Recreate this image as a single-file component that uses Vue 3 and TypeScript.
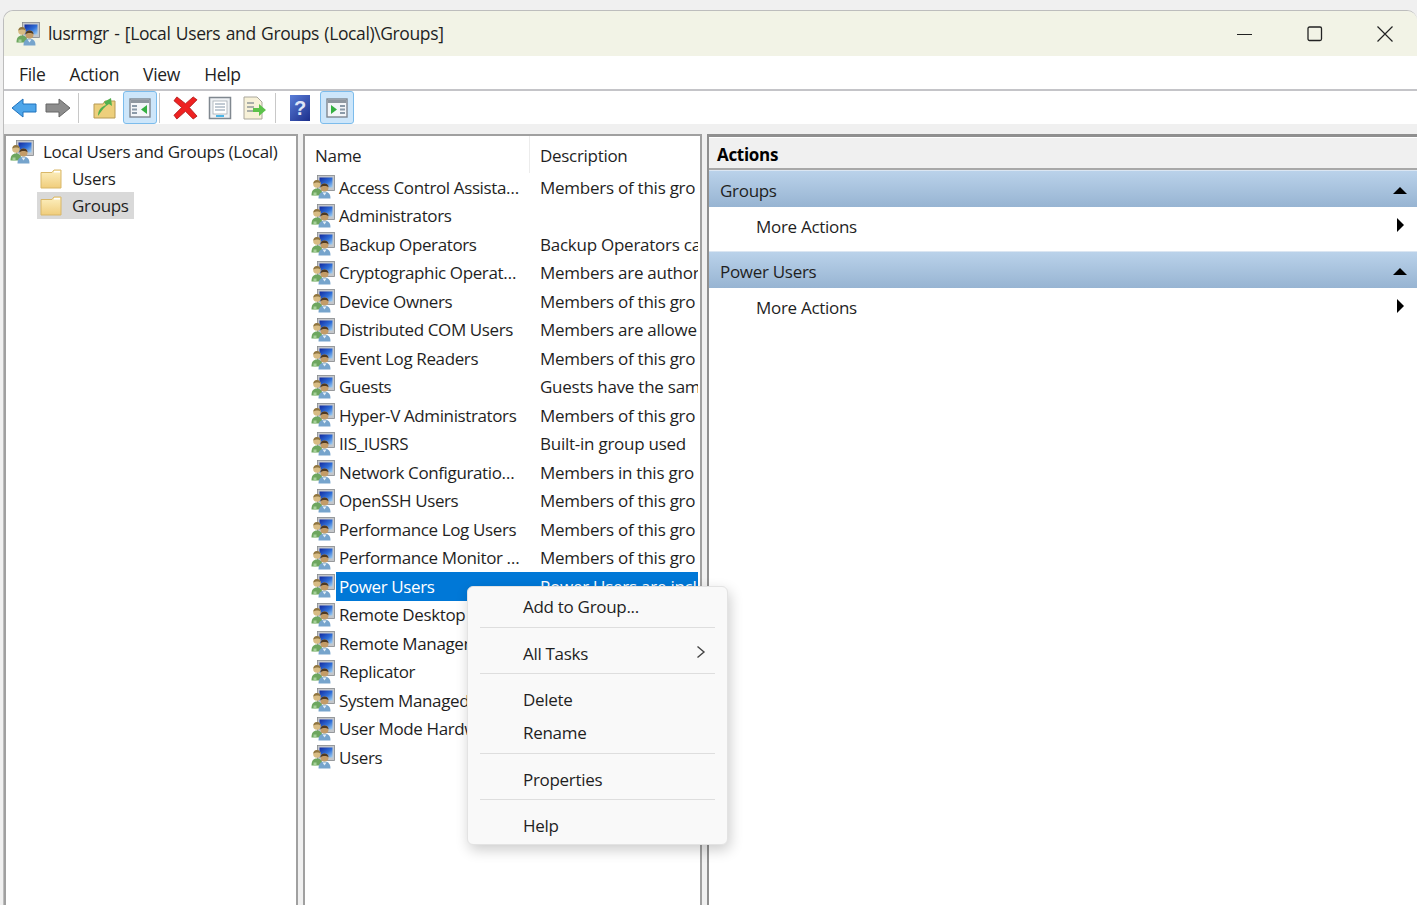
<script setup lang="ts">
interface Group {
  name: string;
  desc: string;
  selected?: boolean;
}

// descriptions are cut where the column cuts them in the console
const groups: Group[] = [
  { name: 'Access Control Assista…', desc: 'Members of this gro' },
  { name: 'Administrators', desc: '' },
  { name: 'Backup Operators', desc: 'Backup Operators ca' },
  { name: 'Cryptographic Operat…', desc: 'Members are author' },
  { name: 'Device Owners', desc: 'Members of this gro' },
  { name: 'Distributed COM Users', desc: 'Members are allowe' },
  { name: 'Event Log Readers', desc: 'Members of this gro' },
  { name: 'Guests', desc: 'Guests have the sam' },
  { name: 'Hyper-V Administrators', desc: 'Members of this gro' },
  { name: 'IIS_IUSRS', desc: 'Built-in group used' },
  { name: 'Network Configuratio…', desc: 'Members in this gro' },
  { name: 'OpenSSH Users', desc: 'Members of this gro' },
  { name: 'Performance Log Users', desc: 'Members of this gro' },
  { name: 'Performance Monitor …', desc: 'Members of this gro' },
  { name: 'Power Users', desc: 'Power Users are incl', selected: true },
  { name: 'Remote Desktop Users', desc: '' },
  { name: 'Remote Management Users', desc: '' },
  { name: 'Replicator', desc: '' },
  { name: 'System Managed Accounts', desc: '' },
  { name: 'User Mode Hardware', desc: '' },
  { name: 'Users', desc: '' },
];

const menus = ['File', 'Action', 'View', 'Help'];
</script>

<template>
  <div class="page">
    <svg class="defs" width="0" height="0">
      <defs>
        <linearGradient id="scr" x1="0" y1="0" x2="1" y2="1">
          <stop offset="0" stop-color="#12299e" />
          <stop offset="0.55" stop-color="#2f6fd8" />
          <stop offset="1" stop-color="#a5d3f2" />
        </linearGradient>
        <linearGradient id="fold" x1="0" y1="0" x2="0" y2="1">
          <stop offset="0" stop-color="#fdf0c0" />
          <stop offset="1" stop-color="#f0cd7c" />
        </linearGradient>
        <symbol id="group" viewBox="0.5 0.5 24 24">
          <rect x="7" y="1" width="17" height="15" fill="#c4c7cb" stroke="#85888c" stroke-width=".8" />
          <rect x="9" y="3" width="13" height="10" fill="url(#scr)" />
          <path d="M1 21c0-5 2-7 5.500-7s5.500 2 5.500 7z" fill="#6da65f" />
          <path d="M3 18h3v3H3z" fill="#a7d09a" />
          <circle cx="6.500" cy="9.500" r="3.800" fill="#d8bc84" />
          <path d="M2.800 9c.2-2.500 2-3.600 3.700-3.600S10 6.500 10.200 9c-1.500-1.500-5.500-1.500-7.400 0z" fill="#8e7440" />
          <path d="M8 24c0-5 2.500-7 6-7s6 2 6 7z" fill="#76a4cc" />
          <path d="M12 18l2 3 2-3z" fill="#e2edf6" />
          <circle cx="14" cy="13" r="4" fill="#c39c68" />
          <path d="M10 12.500c.2-2.500 2.200-3.600 4-3.600s3.800 1.100 4 3.600c-1.600-1.500-6-1.500-8 0z" fill="#4f3a22" />
        </symbol>
        <symbol id="folder" viewBox="0 0 22 22">
          <path d="M1 4.500l0 15.500h20V2h-7l-2 2.500z" fill="url(#fold)" stroke="#d9b768" />
          <path d="M14 3h6v1.500h-6z" fill="#fff" />
        </symbol>
        <symbol id="win" viewBox="0 0 24 24">
          <rect x="2" y="3" width="20" height="18" fill="#f4f6f8" stroke="#7f8790" stroke-width="1.400" />
          <rect x="2.700" y="3.700" width="18.600" height="3.300" fill="#8f979f" />
        </symbol>
      </defs>
    </svg>

    <div class="window">
      <header class="titlebar">
        <svg class="title-ico"><use href="#group" /></svg>
        <span class="title-text">lusrmgr - [Local Users and Groups (Local)\Groups]</span>
        <div class="caption">
          <svg width="16" height="16" viewBox="0 0 16 16"><path d="M0 8.500h15" stroke="#222" fill="none" /></svg>
          <svg width="16" height="16" viewBox="0 0 16 16"><rect x="1" y="1" width="13.500" height="13.500" rx="1.500" stroke="#222" stroke-width="1.300" fill="none" /></svg>
          <svg width="16" height="16" viewBox="0 0 16 16"><path d="M.500.500l15 15M15.500.500l-15 15" stroke="#222" stroke-width="1.200" fill="none" /></svg>
        </div>
      </header>

      <nav class="menubar">
        <span v-for="m in menus" :key="m">{{ m }}</span>
      </nav>

      <div class="toolbar">
        <svg class="tb back" viewBox="0 0 26 24">
          <path d="M1 12L12 3v5h13v8H12v5z" fill="#4ea6ea" stroke="#1f72bd" />
        </svg>
        <svg class="tb fwd" viewBox="0 0 26 24">
          <path d="M25 12L14 3v5H1v8h13v5z" fill="#8d8d8d" stroke="#666" />
        </svg>
        <i class="sep s1"></i>
        <svg class="tb up" viewBox="0 0 24 24">
          <path d="M1 8h9l2-3h10v17H1z" fill="#edcf7c" stroke="#b79a54" />
          <path d="M5 20c0-6 3-9 8-11l-2-3 7-4 1 8-3-2c-4 2-7 6-11 12z" fill="#53b04e" />
        </svg>
        <button class="tb-on on1">
          <svg viewBox="0 0 24 24">
            <use href="#win" />
            <path d="M4 9h5v2H4zM4 12.500h5v2H4zM4 16h5v2H4z" fill="#8b9aa8" />
            <path d="M19 9v9l-6-4.500z" fill="#35b041" />
          </svg>
        </button>
        <i class="sep s2"></i>
        <svg class="tb del" viewBox="0 0 26 26">
          <path d="M4 2l9 7 8-7 4 3-8 8 8 9-4 3-8-8-9 8-3-4 8-8-8-7z" fill="#e22" stroke="#a11" stroke-width=".8" />
        </svg>
        <svg class="tb prop" viewBox="0 0 24 24">
          <rect x="1.500" y="1.500" width="21" height="21" fill="#eef1f4" stroke="#808890" stroke-width="1.500" />
          <rect x="5" y="5" width="14" height="13" fill="#fff" stroke="#a5adb5" stroke-width=".8" />
          <path d="M7 8h10M7 11h10M7 14h10" stroke="#8496a8" fill="none" />
          <rect x="8" y="19" width="8" height="2" fill="#4cb6e8" />
        </svg>
        <svg class="tb exp" viewBox="0 0 24 24">
          <path d="M1 1h13l5 5v17H1z" fill="#f7f1d8" stroke="#aaa79c" />
          <path d="M4 7h7M4 11h7M4 15h6" stroke="#5f6d7a" stroke-width="1.200" fill="none" />
          <path d="M10 12h6V8l7 6-7 6v-4h-6z" fill="#5cc24a" />
        </svg>
        <i class="sep s3"></i>
        <div class="help-ico">?</div>
        <button class="tb-on on2">
          <svg viewBox="0 0 24 24">
            <use href="#win" />
            <path d="M15 9h5v2h-5zM15 12.500h5v2h-5zM15 16h5v2h-5z" fill="#8b9aa8" />
            <path d="M6 9v9l6-4.500z" fill="#35b041" />
          </svg>
        </button>
      </div>

      <div class="strip"></div>

      <main class="panes">
        <aside class="tree">
          <div class="tree-root">
            <svg class="ico"><use href="#group" /></svg>
            <span>Local Users and Groups (Local)</span>
          </div>
          <div class="tree-item">
            <svg class="fold"><use href="#folder" /></svg>
            <span class="tree-lbl">Users</span>
          </div>
          <div class="tree-item current">
            <svg class="fold"><use href="#folder" /></svg>
            <span class="tree-lbl">Groups</span>
          </div>
        </aside>

        <section class="list">
          <div class="list-head">
            <span class="col-name">Name</span>
            <span class="col-desc">Description</span>
          </div>
          <div v-for="g in groups" :key="g.name" class="row" :class="{ selected: g.selected }">
            <svg class="ico"><use href="#group" /></svg>
            <div class="row-body">
              <span class="row-name">{{ g.name }}</span>
              <span class="row-desc">{{ g.desc }}</span>
            </div>
          </div>
        </section>

        <section class="actions">
          <div class="act-head">Actions</div>
          <div class="act-bar">
            <span>Groups</span>
            <i class="tri-up"></i>
          </div>
          <div class="act-row">
            <span>More Actions</span>
            <i class="tri-right"></i>
          </div>
          <div class="act-bar">
            <span>Power Users</span>
            <i class="tri-up"></i>
          </div>
          <div class="act-row">
            <span>More Actions</span>
            <i class="tri-right"></i>
          </div>
        </section>
      </main>
    </div>

    <div class="ctx">
      <div class="ctx-item first">Add to Group...</div>
      <hr />
      <div class="ctx-item">
        All Tasks
        <svg width="10" height="14" viewBox="0 0 10 14"><path d="M1.500 1.500L8 7l-6.500 5.500" stroke="#444" stroke-width="1.400" fill="none" /></svg>
      </div>
      <hr />
      <div class="ctx-item del-item">Delete</div>
      <div class="ctx-item ren-item">Rename</div>
      <hr />
      <div class="ctx-item">Properties</div>
      <hr />
      <div class="ctx-item">Help</div>
    </div>
  </div>
</template>

<style scoped>
.page {
  position: relative;
  width: 1417px;
  height: 905px;
  overflow: hidden;
  background: #f0f0f0;
  padding: 10px 0 0 3px;
  box-sizing: border-box;
  font-family: "Open Sans", "Noto Sans", sans-serif;
  font-size: 17px;
  letter-spacing: -0.3px;
  color: #1f1f1f;
}

.defs {
  position: absolute;
}

.window {
  height: 100%;
  display: flex;
  flex-direction: column;
  border: 1px solid #bdbdbd;
  border-width: 1px 0 0 1px;
  border-top-left-radius: 10px;
  border-top-right-radius: 10px;
  overflow: hidden;
  background: #f0f0f0;
}

.titlebar {
  flex: 0 0 45px;
  display: flex;
  align-items: center;
  background: #f2f3e6;
  padding-left: 12px;
}

.title-ico {
  width: 24px;
  height: 24px;
  margin-right: 8px;
}

.title-text {
  font-size: 17.5px;
  letter-spacing: -0.38px;
  word-spacing: 1.2px;
  padding-bottom: 2px;
}

.caption {
  margin-left: auto;
  display: flex;
  gap: 54px;
  padding-right: 24px;
  padding-top: 1px;
}

.menubar {
  flex: 0 0 31px;
  display: flex;
  align-items: center;
  gap: 24px;
  padding: 2px 0 0 15px;
  font-size: 17.5px;
  background: #fff;
  border-bottom: 2px solid #c4c4c8;
}

.toolbar {
  flex: 0 0 33px;
  display: flex;
  align-items: center;
  background: #fff;
  padding-left: 7px;
}

.tb {
  display: block;
  flex: none;
}

.back {
  width: 26px;
  height: 24px;
  margin-right: 8px;
}

.fwd {
  width: 26px;
  height: 24px;
  margin-right: 7px;
}

.sep {
  width: 1px;
  height: 30px;
  background: #c8c8c8;
  flex: none;
}

.s1 {
  margin: 0 14px 0 0;
}

.s2 {
  margin: 0 13px 0 2px;
}

.s3 {
  margin: 0 14px 0 8px;
}

.up {
  width: 24px;
  height: 24px;
  margin-right: 6px;
}

.tb-on {
  width: 34px;
  height: 33px;
  padding: 4px 4px;
  box-sizing: border-box;
  background: #cde6fa;
  border: 1px solid #7cbcec;
  border-radius: 3px;
  flex: none;
}

.tb-on svg {
  display: block;
  width: 24px;
  height: 24px;
}

.del {
  width: 25px;
  height: 25px;
  margin-right: 10px;
}

.prop {
  width: 24px;
  height: 24px;
  margin-right: 11px;
}

.exp {
  width: 24px;
  height: 24px;
}

.help-ico {
  flex: none;
  width: 20px;
  height: 26px;
  margin-right: 10px;
  background: linear-gradient(135deg, #5a7ed8, #1c2f8c);
  color: #dfe6f7;
  font: bold 20px/26px "Liberation Sans", sans-serif;
  text-align: center;
}

.strip {
  flex: 0 0 10px;
  background: #f0f0f0;
}

.panes {
  flex: 1;
  min-height: 0;
  display: flex;
  gap: 5px;
  background: #f0f0f0;
}

.tree {
  flex: 0 0 294px;
  box-sizing: border-box;
  background: #fff;
  border: 2px solid #a0a0a0;
  border-bottom: 0;
  padding: 2px 0 0 4px;
}

.tree-root {
  display: flex;
  align-items: center;
  gap: 9px;
  height: 27px;
}

.ico {
  width: 24px;
  height: 24px;
  flex: none;
}

.tree-item {
  display: flex;
  align-items: center;
  height: 27px;
  margin-left: 27px;
  padding: 0 5px 0 3px;
  width: fit-content;
}

.tree-item.current {
  background: #d9d9d9;
}

.fold {
  width: 22px;
  height: 22px;
  margin-right: 10px;
}

.list {
  flex: 0 0 399px;
  box-sizing: border-box;
  background: #fff;
  border: 2px solid #a0a0a0;
  border-bottom: 0;
  overflow: hidden;
}

.list-head {
  display: flex;
  height: 37px;
  align-items: center;
}

.col-name {
  width: 225px;
  padding: 2px 0 0 10px;
  box-sizing: border-box;
  border-right: 1px solid #ececec;
  height: 100%;
  display: flex;
  align-items: center;
}

.col-desc {
  padding: 2px 0 0 10px;
}

.row {
  display: flex;
  align-items: center;
  height: 28.5px;
  padding-left: 6px;
}

.row-body {
  flex: 1;
  min-width: 0;
  display: flex;
  align-items: center;
  height: 100%;
  margin-right: 2px;
  margin-left: 1px;
  overflow: hidden;
}

.row.selected .row-body {
  background: #0078d7;
  color: #fff;
}

.row-name {
  flex: 0 0 204px;
  padding-left: 3px;
  box-sizing: border-box;
  letter-spacing: -0.38px;
  white-space: nowrap;
  overflow: hidden;
}

.row-desc {
  flex: 1;
  white-space: nowrap;
  overflow: hidden;
  letter-spacing: -0.25px;
}

.actions {
  flex: 1;
  min-width: 0;
  background: #fff;
  border-top: 3px solid #8f8f8f;
  border-left: 2px solid #8f8f8f;
  padding-top: 1px;
}

.act-head {
  height: 30px;
  line-height: 33px;
  padding-left: 8px;
  font-weight: 700;
  color: #000;
  background: #f0f0f0;
  border-bottom: 2px solid #a8a8a8;
}

.act-bar {
  height: 37px;
  display: flex;
  align-items: center;
  justify-content: space-between;
  padding: 2px 10px 0 11px;
  background: linear-gradient(#bad2ea, #97b4d2);
  border-top: 1px solid #dbe6f2;
  box-sizing: border-box;
}

.act-row {
  height: 44px;
  display: flex;
  align-items: center;
  justify-content: space-between;
  padding: 0 13px 6px 47px;
  box-sizing: border-box;
}

.tri-up {
  border: 7px solid transparent;
  border-bottom-color: #000;
  border-top: 0;
}

.tri-right {
  border: 7px solid transparent;
  border-left: 7px solid #000;
  border-right: 0;
  margin-top: -2px;
}

.ctx {
  position: absolute;
  left: 467px;
  top: 586px;
  width: 261px;
  height: 259px;
  box-sizing: border-box;
  padding: 0 12px;
  background: #f9f9f9;
  border: 1px solid #e3e3e3;
  border-radius: 6px;
  box-shadow: 2px 5px 14px rgba(0, 0, 0, 0.2);
}

.ctx hr {
  border: 0;
  height: 1px;
  margin: 0;
  background: #dedede;
}

.ctx-item {
  height: 45px;
  padding: 5px 9px 0 43px;
  box-sizing: border-box;
  display: flex;
  align-items: center;
  justify-content: space-between;
}

.ctx-item svg {
  margin-top: -2px;
}

.ctx-item.first {
  height: 40px;
  padding-top: 0;
  padding-bottom: 2px;
}

.del-item {
  height: 39px;
  padding-top: 12px;
}

.ren-item {
  height: 40px;
  padding-top: 0;
  padding-bottom: 1px;
}
</style>

<style>
html,
body {
  margin: 0;
  overflow: hidden;
}
</style>
